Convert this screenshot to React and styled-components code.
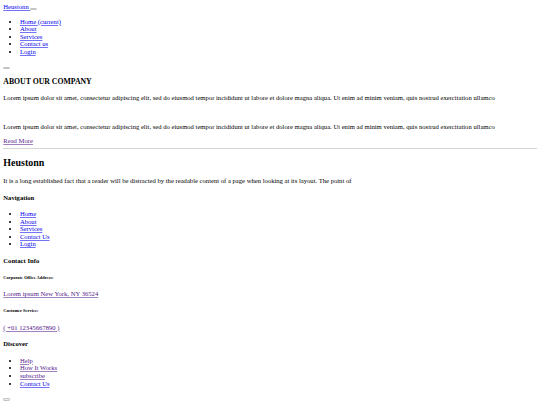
import React from 'react'
import styled, { createGlobalStyle } from 'styled-components'

// the reference is a wide desktop page shot down to 540px, so every
// browser default is scaled by the same factor
const k = 0.415
const s = (px) => `${(px * k).toFixed(3)}px`

const GlobalStyle = createGlobalStyle`
  body {
    margin: ${s(8)};
    background: #fff;
    color: #000;
    font-family: "Liberation Serif", "Times New Roman", serif;
    font-size: ${s(16)};
    line-height: 1.15;
  }
`

const linkColor = (p) => (p.$visited ? '#551a8b' : '#0000ee')
const lineColor = (p) => (p.$visited ? 'rgba(85, 26, 139, 0.55)' : 'rgba(0, 0, 238, 0.55)')

const Navbar = styled.nav`
  display: block;
`

const Brand = styled.a`
  color: #0000ee;
  text-decoration: underline;
  text-decoration-color: rgba(0, 0, 238, 0.55);
  cursor: pointer;
`

const Toggler = styled.button`
  display: inline-block;
  box-sizing: border-box;
  width: ${s(16)};
  height: ${s(6)};
  padding: 0;
  border: 1px solid #c4c4c4;
  border-radius: 1px;
  background: #ececec;
  vertical-align: baseline;
  margin-bottom: ${s(-2)};
`

const List = styled.ul`
  margin: ${s(16)} 0;
  padding-left: ${s(40)};
  list-style: disc;
`

const Item = styled.li`
  line-height: 1.15;
`

const Link = styled.a`
  color: ${linkColor};
  text-decoration: underline;
  text-decoration-color: ${lineColor};
  cursor: pointer;
`

const About = styled.section`
  display: block;
`

const SectionTitle = styled.h3`
  font-size: ${s(18.72)};
  font-weight: bold;
  margin: ${s(18.72)} 0;
`

const Text = styled.p`
  margin: ${s(16)} 0;
`

const Blank = styled.p`
  margin: ${s(16)} 0;
`

const Divider = styled.hr`
  margin: ${s(8)} 0;
  height: 0;
  border: 0;
  border-top: 1px solid #d6d6d6;
`

const Footer = styled.footer`
  display: block;
`

const FooterTitle = styled.h2`
  font-size: ${s(24)};
  font-weight: bold;
  margin: ${s(19.92)} 0;
`

const ColumnTitle = styled.h4`
  font-size: ${s(16)};
  font-weight: bold;
  margin: ${s(21.28)} 0;
`

const Label = styled.h6`
  font-size: ${s(10.72)};
  font-weight: bold;
  margin: ${s(24.98)} 0;
`

const ToTop = styled(Toggler)`
  margin-top: ${s(6)};
`

const lorem =
  'Lorem ipsum dolor sit amet, consectetur adipiscing elit, sed do eiusmod tempor incididunt ut labore et dolore magna aliqua. Ut enim ad minim veniam, quis nostrud exercitation ullamco'

const mainLinks = ['Home (current)', 'About', 'Services', 'Contact us', 'Login']
const footerLinks = ['Home', 'About', 'Services', 'Contact Us', 'Login']
const discoverLinks = [
  { label: 'Help', visited: true },
  { label: 'How It Works', visited: true },
  { label: 'subscribe', visited: true },
  { label: 'Contact Us', visited: false },
]

export default function App() {
  return (
    <>
      <GlobalStyle />
      <Navbar>
        <Brand>Heustonn </Brand>
        <Toggler type="button" />
        <List>
          {mainLinks.map((l) => (
            <Item key={l}>
              <Link>{l}</Link>
            </Item>
          ))}
        </List>
        <Toggler type="button" />
      </Navbar>

      <About>
        <SectionTitle>ABOUT OUR COMPANY</SectionTitle>
        <Text>{lorem}</Text>
        <Blank>&nbsp;</Blank>
        <Text>{lorem}</Text>
        <div>
          <Link $visited>Read More</Link>
        </div>
      </About>

      <Divider />

      <Footer>
        <FooterTitle>Heustonn</FooterTitle>
        <Text>
          It is a long established fact that a reader will be distracted by the readable content of a
          page when looking at its layout. The point of
        </Text>

        <ColumnTitle>Navigation</ColumnTitle>
        <List>
          {footerLinks.map((l) => (
            <Item key={l}>
              <Link>{l}</Link>
            </Item>
          ))}
        </List>

        <ColumnTitle>Contact Info</ColumnTitle>
        <Label>Corporate Office Address:</Label>
        <Text>
          <Link $visited> Lorem ipsum New York, NY 36524</Link>
        </Text>
        <Label>Customer Service:</Label>
        <Text>
          <Link $visited> ( +01 12345667890 )</Link>
        </Text>

        <ColumnTitle>Discover</ColumnTitle>
        <List>
          {discoverLinks.map((l) => (
            <Item key={l.label}>
              <Link $visited={l.visited}>{l.label}</Link>
            </Item>
          ))}
        </List>

        <ToTop type="button" />
      </Footer>
    </>
  )
}
